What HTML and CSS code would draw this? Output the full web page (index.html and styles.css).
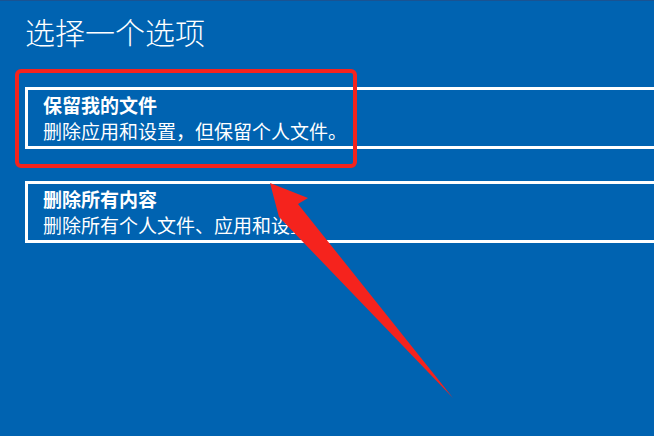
FILE: index.html
```html
<!DOCTYPE html>
<html lang="zh-CN">
<head>
<meta charset="utf-8">
<title>选择一个选项</title>
<link rel="stylesheet" href="styles.css">
</head>
<body>
<div class="page">
  <h1 class="title">选择一个选项</h1>
  <div class="options">
    <div class="option">
      <div class="opt-title">保留我的文件</div>
      <div class="opt-desc">删除应用和设置，但保留个人文件。</div>
    </div>
    <div class="option">
      <div class="opt-title">删除所有内容</div>
      <div class="opt-desc">删除所有个人文件、应用和设置。</div>
    </div>
  </div>
  <svg class="annotation" viewBox="0 0 654 436" xmlns="http://www.w3.org/2000/svg">
    <rect x="17" y="70" width="338" height="95" rx="4" ry="4" fill="none" stroke="#f5231d" stroke-width="4"/>
    <polygon points="270,182 308,197 298,203 453,397 279,216" fill="#f5231d"/>
  </svg>
</div>
</body>
</html>
```

FILE: styles.css
```css
html, body {
  margin: 0;
  padding: 0;
  height: 100%;
}

body {
  background: #0063b1;
  overflow: hidden;
  color: #ffffff;
  font-family: "Noto Sans CJK SC", "Noto Sans", sans-serif;
}

.page {
  position: relative;
  width: 654px;
  height: 436px;
  overflow: hidden;
  box-sizing: border-box;
  padding: 16px 0 0 25px;
  border-top: 1px solid #1a5392;
}

.title {
  margin: 0;
  font-size: 30px;
  line-height: 30px;
  font-weight: 300;
  margin-top: -1px;
}

.options {
  margin-top: 41px;
  margin-right: -20px;
  display: flex;
  flex-direction: column;
  gap: 32px;
}

.option {
  height: 62px;
  box-sizing: border-box;
  border: 3px solid #ffffff;
  padding: 2px 0 2px 15px;
}

.opt-title {
  font-size: 19px;
  line-height: 26px;
  font-weight: 700;
}

.opt-desc {
  font-size: 19px;
  line-height: 26px;
  font-weight: 400;
}

.annotation {
  position: absolute;
  left: 0;
  top: 0;
  width: 654px;
  height: 436px;
  pointer-events: none;
}
```
